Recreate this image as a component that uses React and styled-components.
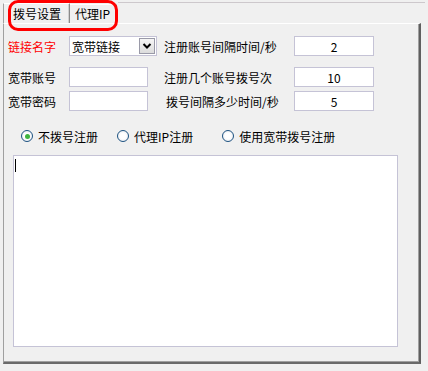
import React from 'react';
import styled, {createGlobalStyle} from 'styled-components';

const GlobalStyle = createGlobalStyle`
  html, body {
    margin: 0;
    padding: 0;
    background: #f0f0f0;
  }
  body {
    font-family: "Noto Sans CJK SC", "DejaVu Sans", sans-serif;
    font-size: 12px;
    color: #000;
  }
`;

const Frame = styled.div`
  position: relative;
  width: 428px;
  height: 371px;
  box-sizing: border-box;
  padding: 3px 0 0 3px;
  background: #f0f0f0;
  overflow: hidden;
`;

const TopEdge = styled.div`
  position: absolute;
  top: 2px;
  left: 118px;
  right: 3px;
  height: 1px;
  background: #cdc8cc;
`;

const TabStrip = styled.div`
  display: flex;
  align-items: flex-end;
  height: 20px;
`;

const Tab = styled.div`
  box-sizing: border-box;
  height: ${p => (p.$active ? '20px' : '18px')};
  padding: ${p => (p.$active ? '0 8px 0 9px' : '0 6px 0 5px')};
  display: flex;
  align-items: center;
  line-height: 1;
  border-top: 1px solid #fff;
  border-left: ${p => (p.$active ? '1px solid #a0a0a0' : 'none')};
  border-right: 1px solid #8a8a8a;
  box-shadow: inset -1px 0 0 #d0d0d0;
  margin-bottom: ${p => (p.$active ? '0' : '1px')};
`;

const Annotation = styled.div`
  position: absolute;
  left: 8px;
  top: 0;
  width: 110px;
  height: 31px;
  box-sizing: border-box;
  border: 3px solid #ff0000;
  border-radius: 10px;
  pointer-events: none;
`;

const Panel = styled.div`
  box-sizing: border-box;
  width: 418px;
  height: 341px;
  border-top: 1px solid #fff;
  border-left: 1px solid #a0a0a0;
  border-right: 2px solid #5f5f5f;
  border-bottom: 2px solid #6a6a6a;
  box-shadow: inset -1px -1px 0 #a0a0a0;
  padding: 12px 0 0 4px;
  display: flex;
  flex-direction: column;
`;

const Row = styled.div`
  display: flex;
  align-items: center;
  height: 20px;
  margin-top: ${p => p.$gap || 0}px;
`;

const Label = styled.span`
  width: ${p => p.$w}px;
  padding-left: ${p => p.$pl || 0}px;
  box-sizing: border-box;
  color: ${p => (p.$red ? '#ff0000' : '#000')};
  white-space: nowrap;
  flex-shrink: 0;
`;

const Field = styled.div`
  box-sizing: border-box;
  width: ${p => p.$w}px;
  height: 20px;
  background: #fff;
  border: 1px solid #c5c3d6;
  display: flex;
  align-items: center;
  justify-content: ${p => (p.$center ? 'center' : 'flex-start')};
  padding-left: ${p => (p.$center ? 0 : 2)}px;
  flex-shrink: 0;
  margin-right: ${p => p.$mr || 0}px;
`;

const Select = styled(Field)`
  justify-content: space-between;
  padding-right: 1px;
`;

const DropButton = styled.div`
  width: 16px;
  height: 16px;
  box-sizing: border-box;
  border: 1px solid #9a9aa8;
  background: linear-gradient(#f6f6f6, #dcdcdc);
  display: flex;
  align-items: center;
  justify-content: center;
`;

const RadioRow = styled.div`
  display: flex;
  align-items: center;
  height: 20px;
  margin-top: 15px;
  padding-left: 13px;
`;

const RadioItem = styled.label`
  display: flex;
  align-items: center;
  gap: 5px;
  margin-right: ${p => p.$mr}px;
`;

const RadioDot = styled.span`
  width: 12px;
  height: 12px;
  box-sizing: border-box;
  border-radius: 50%;
  border: 1px solid #1d5281;
  background: radial-gradient(circle at 50% 50%, #fff 40%, #dfe3ea 100%);
  display: flex;
  align-items: center;
  justify-content: center;
  &::after {
    content: '';
    display: ${p => (p.$on ? 'block' : 'none')};
    width: 5px;
    height: 5px;
    border-radius: 50%;
    background: #3fb43f;
  }
`;

const TextArea = styled.div`
  box-sizing: border-box;
  width: 385px;
  height: 192px;
  margin: 9px 0 0 5px;
  background: #fff;
  border: 1px solid #c5c3d6;
  padding: 3px 0 0 1px;
`;

const Caret = styled.div`
  width: 1px;
  height: 13px;
  background: #000;
`;

const Chevron = () => (
  <svg width="10" height="8" viewBox="0 0 10 8">
    <path d="M1.5 2 L5 5.5 L8.5 2" fill="none" stroke="#000" strokeWidth="2" />
  </svg>
);

export default function App() {
  return (
    <>
      <GlobalStyle />
      <Frame>
        <TopEdge />
        <TabStrip>
          <Tab $active>拨号设置</Tab>
          <Tab>代理IP</Tab>
        </TabStrip>
        <Panel>
          <Row>
            <Label $w={61} $red>链接名字</Label>
            <Select $w={88} $mr={7}>
              宽带链接
              <DropButton><Chevron /></DropButton>
            </Select>
            <Label $w={130}>注册账号间隔时间/秒</Label>
            <Field $w={80} $center>2</Field>
          </Row>
          <Row $gap={11}>
            <Label $w={61}>宽带账号</Label>
            <Field $w={79} $mr={16} />
            <Label $w={130}>注册几个账号拨号次</Label>
            <Field $w={80} $center>10</Field>
          </Row>
          <Row $gap={4}>
            <Label $w={61}>宽带密码</Label>
            <Field $w={79} $mr={16} />
            <Label $w={130} $pl={2}>拨号间隔多少时间/秒</Label>
            <Field $w={80} $center>5</Field>
          </Row>
          <RadioRow>
            <RadioItem $mr={19}><RadioDot $on />不拨号注册</RadioItem>
            <RadioItem $mr={29}><RadioDot />代理IP注册</RadioItem>
            <RadioItem $mr={0}><RadioDot />使用宽带拨号注册</RadioItem>
          </RadioRow>
          <TextArea><Caret /></TextArea>
        </Panel>
        <Annotation />
      </Frame>
    </>
  );
}
